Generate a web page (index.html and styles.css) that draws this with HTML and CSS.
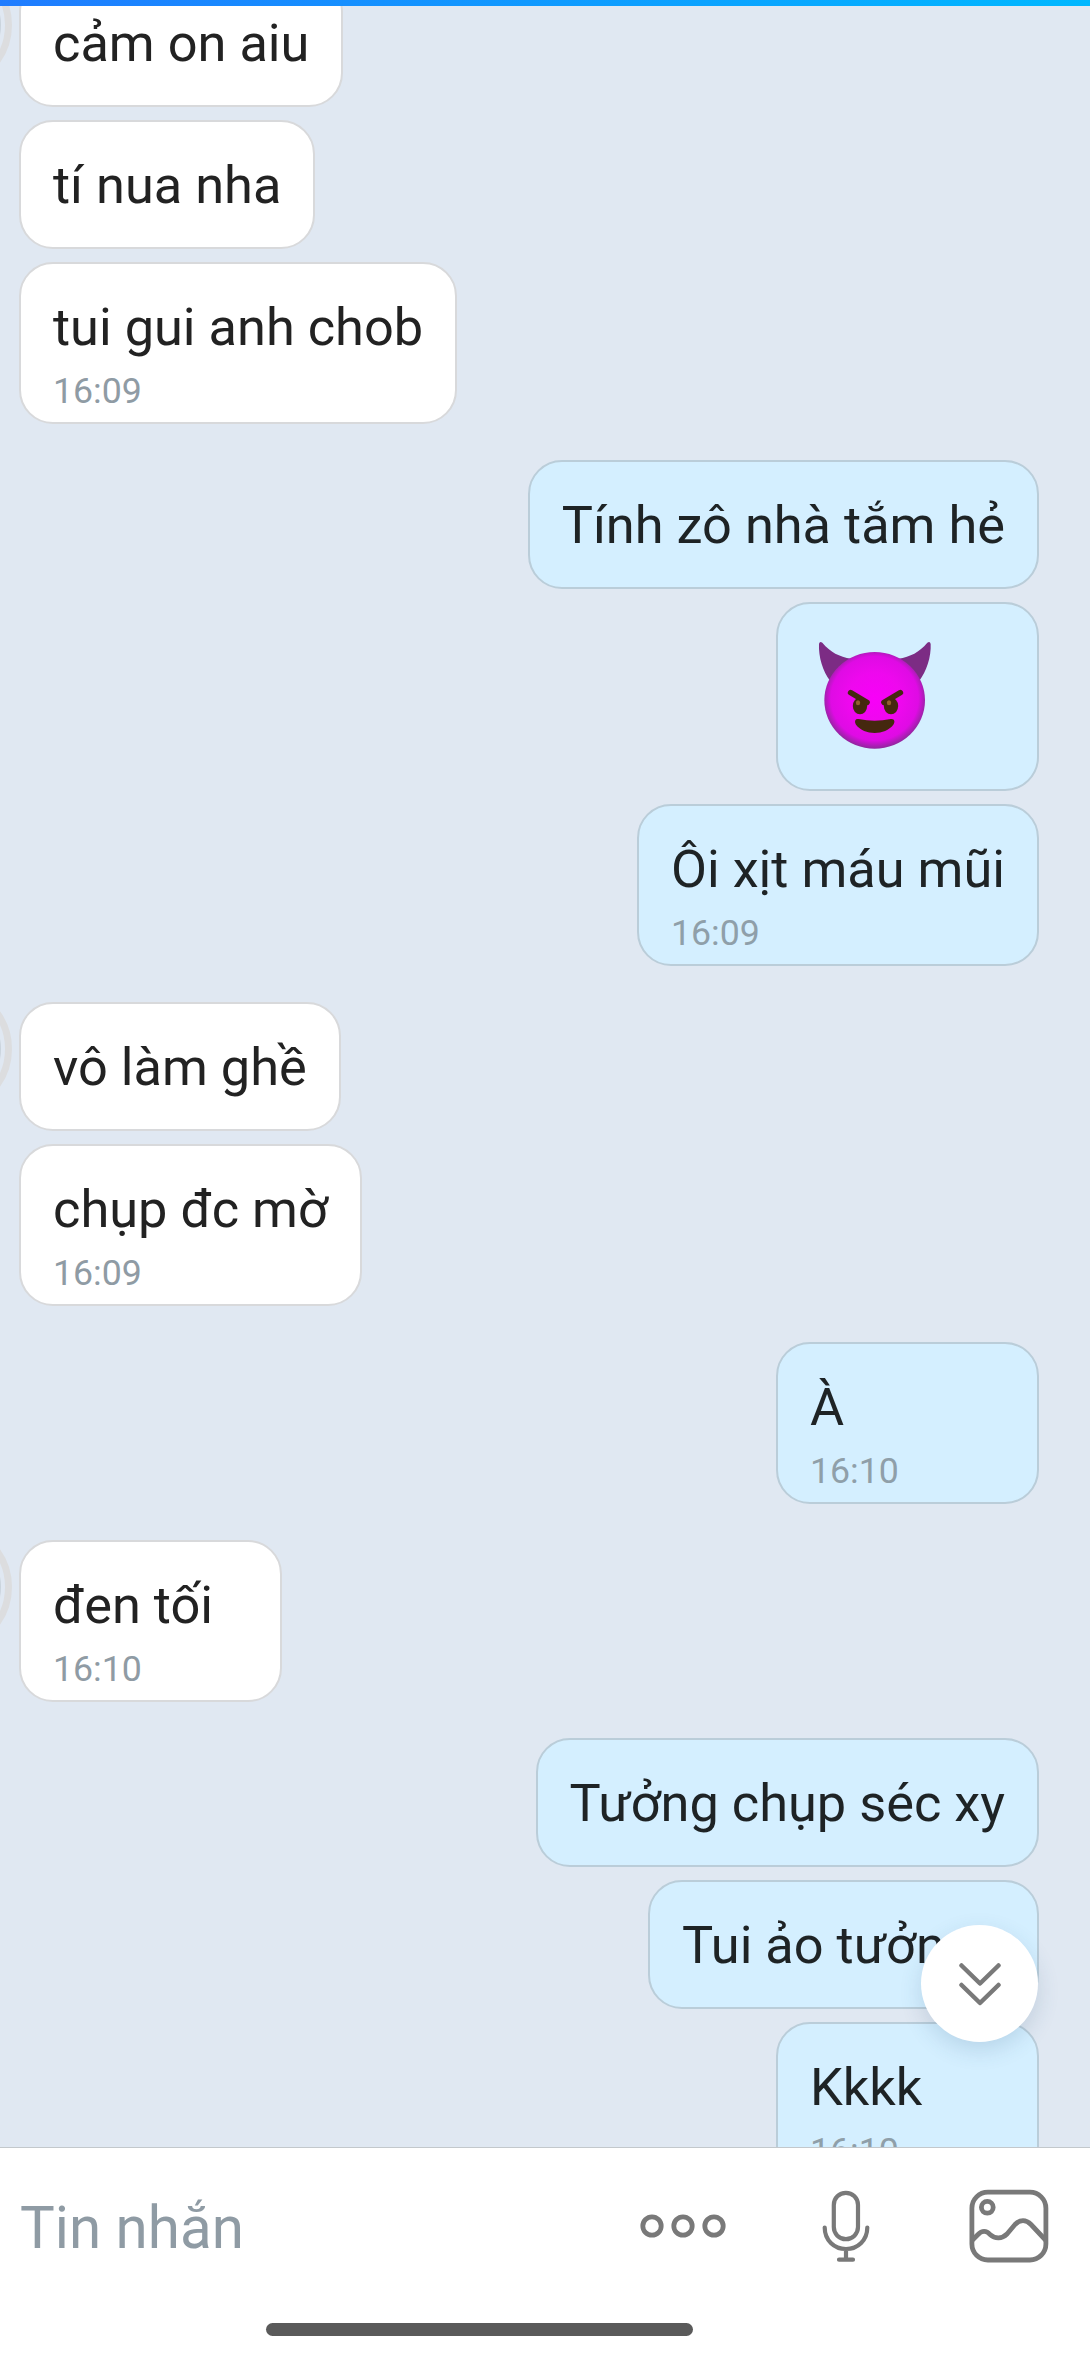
FILE: index.html
```html
<!DOCTYPE html>
<html lang="vi">
<head>
<meta charset="utf-8">
<title>Tin nhắn</title>
<link rel="stylesheet" href="styles.css">
</head>
<body>
<div class="topbar"></div>
<main class="chat">
  <section class="group in">
    <i class="avatar"></i>
    <div class="bubble"><p>cảm on aiu</p></div>
    <div class="bubble"><p>tí nua nha</p></div>
    <div class="bubble"><p>tui gui anh chob</p><time>16:09</time></div>
  </section>
  <section class="group out">
    <div class="bubble"><p>Tính zô nhà tắm hẻ</p></div>
    <div class="bubble emoji">
      <svg width="128" height="120" viewBox="63 54 384 360" role="img" aria-label="mặt quỷ cười">
        <defs>
          <radialGradient id="face" cx=".5" cy=".48" r=".53">
            <stop offset="0" stop-color="#f800f8"/><stop offset=".5" stop-color="#ee08ee"/><stop offset=".82" stop-color="#df0be4"/><stop offset="1" stop-color="#862a94"/>
          </radialGradient>
        </defs>
        <path fill="#7c2c84" d="M120 182C99 156 85 110 87 72Q89 62 97 68C122 97 147 110 184 116ZM388 182C409 156 424 110 422 72Q420 62 412 68C387 97 362 110 325 116Z"/>
        <ellipse cx="254" cy="241" rx="151" ry="145" fill="url(#face)"/>
        <g fill="#45280f">
          <ellipse cx="210" cy="258" rx="21.500" ry="25"/><ellipse cx="303" cy="258" rx="21.500" ry="25"/>
          <path d="M206 297Q254 308 302 297C314 295 316 306 310 314C285 347 223 347 198 314C192 303 196 295 206 297Z"/>
        </g>
        <path d="M182 218L231 247M331 218L282 247" fill="none" stroke="#45280f" stroke-width="17" stroke-linecap="round"/>
        <ellipse cx="204" cy="248" rx="6.500" ry="7.500" fill="#93602d"/><ellipse cx="297" cy="248" rx="6.500" ry="7.500" fill="#93602d"/>
      </svg>
    </div>
    <div class="bubble"><p>Ôi xịt máu mũi</p><time>16:09</time></div>
  </section>
  <section class="group in">
    <i class="avatar"></i>
    <div class="bubble"><p>vô làm ghề</p></div>
    <div class="bubble"><p>chụp đc mờ</p><time>16:09</time></div>
  </section>
  <section class="group out">
    <div class="bubble"><p>À</p><time>16:10</time></div>
  </section>
  <section class="group in">
    <i class="avatar"></i>
    <div class="bubble"><p>đen tối</p><time>16:10</time></div>
  </section>
  <section class="group out">
    <div class="bubble"><p>Tưởng chụp séc xy</p></div>
    <div class="bubble wide"><p>Tui ảo tưởng</p></div>
    <div class="bubble"><p>Kkkk</p><time>16:10</time></div>
  </section>
  <button class="jump" aria-label="Xuống cuối">
    <svg width="42" height="44" viewBox="0 0 42 44"><path d="M2.500 2.500L21 20.500L39.500 2.500M2.500 22L21 40L39.500 22"/></svg>
  </button>
</main>
<footer class="composer">
  <div class="row">
    <span class="placeholder">Tin nhắn</span>
    <svg class="icon more" width="86" height="24" viewBox="0 0 86 24"><g stroke-width="4.800"><circle cx="12" cy="12" r="9.200"/><circle cx="43" cy="12" r="9.200"/><circle cx="74" cy="12" r="9.200"/></g></svg>
    <svg class="icon mic" width="48" height="72" viewBox="0 0 48 72"><g stroke-width="4.200"><rect x="11.800" y="2.800" width="24.200" height="46.400" rx="12.100"/><path d="M2.700 37.500C2.700 50 12 59 24 59S45.300 50 45.300 37.500M24 59V69.500M17 69.700H31"/></g></svg>
    <svg class="icon picture" width="80" height="74" viewBox="0 0 80 74"><g stroke-width="4.800"><rect x="2.900" y="3.200" width="74" height="67.800" rx="16"/><circle cx="18.300" cy="18.300" r="5.900"/><path d="M3.500 51L9 45.500C13 41.200 17.500 41.500 21 45.500C26 50 33 50 38 45L46 35.500C51 30.300 57 30.300 62 35.500L76.500 51"/></g></svg>
  </div>
  <div class="home"></div>
</footer>
</body>
</html>
```
FILE: styles.css
```css
* { box-sizing: border-box; }
body {
  margin: 0;
  width: 1090px;
  height: 2356px;
  display: flex;
  flex-direction: column;
  overflow: hidden;
  background: #e0e8f2;
  color: #222;
  font-family: Roboto, "Liberation Sans", sans-serif;
}
.topbar {
  height: 6px;
  flex: none;
  position: relative;
  z-index: 1;
  background: linear-gradient(90deg, #1f7cff, #00b8ff);
}
.chat {
  position: relative;
  height: 2141px;
  flex: none;
  overflow: hidden;
  display: flex;
  flex-direction: column;
  gap: 36px;
}
.group {
  position: relative;
  flex: none;
  display: flex;
  flex-direction: column;
  gap: 13px;
  align-items: flex-start;
  padding: 0 51px 0 19px;
}
.group:first-child { margin-top: -28px; }
.group.out { align-items: flex-end; }
.bubble {
  height: 129px;
  border: 2px solid #d8d9db;
  border-radius: 34px;
  background: #fff;
  padding: 33px 32px 0;
}
.bubble:has(time) { height: 162px; min-width: 263px; }
.bubble.wide { width: 391px; }
.out .bubble { background: #d4efff; border-color: #bacdd9; color: #1e2325; }
.bubble p {
  margin: 0;
  font-size: 52.320px;
  line-height: 60px;
  white-space: nowrap;
}
.bubble time {
  display: block;
  margin-top: 13px;
  font-size: 35.700px;
  line-height: 42px;
  color: #8f9ba4;
}
.out .bubble time { color: #8f9fa9; }
.bubble.emoji { height: 189px; width: 263px; padding: 34px 33px 0; }
.emoji svg { display: block; }
.avatar {
  position: absolute;
  left: -118px;
  top: -18px;
  width: 130px;
  height: 130px;
  border: 7px solid #dcdddf;
  border-radius: 50%;
  padding: 4px;
  background: #c9d3dc content-box;
}
.jump {
  position: absolute;
  left: 921px;
  top: 1919px;
  width: 117px;
  height: 117px;
  border: 0;
  border-radius: 50%;
  padding: 2px 0 0;
  display: grid;
  place-items: center;
  background: #fff;
  box-shadow: 0 8px 22px rgba(40, 80, 120, .16);
}
.jump svg {
  fill: none;
  stroke: #797979;
  stroke-width: 4.500px;
  stroke-linecap: round;
  stroke-linejoin: round;
}
.composer {
  height: 209px;
  flex: none;
  border-top: 1px solid #c3c8cc;
  background: #fff;
}
.row {
  height: 156px;
  display: flex;
  align-items: center;
  padding: 0 41.500px 0 20px;
}
.placeholder { flex: 1; padding-top: 3px; font-size: 58.300px; line-height: 70px; color: #8f9ba4; }
.icon { flex: none; fill: none; stroke: #797979; stroke-linecap: round; stroke-linejoin: round; }
.mic { margin-left: 96px; }
.picture { margin-left: 99px; }
.home {
  width: 427px;
  height: 13px;
  margin: 19px 0 0 266px;
  border-radius: 7px;
  background: #5a5a5a;
}
```
